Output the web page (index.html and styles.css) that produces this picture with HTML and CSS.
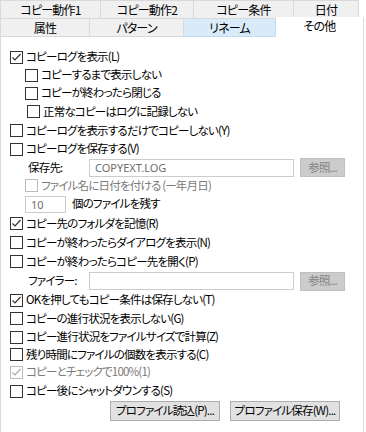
FILE: index.html
```html
<!DOCTYPE html>
<html lang="ja">
<head>
<meta charset="utf-8">
<link rel="stylesheet" href="styles.css">
</head>
<body>
<div class="tabs">
  <div class="tabrow">
    <div class="tab t1">コピー動作1</div>
    <div class="tab t2">コピー動作2</div>
    <div class="tab t3">コピー条件</div>
    <div class="tab t4">日付</div>
  </div>
  <div class="tabrow">
    <div class="tab b1">属性</div>
    <div class="tab b2">パターン</div>
    <div class="tab b3 hover">リネーム</div>
    <div class="tab b4 active">その他</div>
  </div>
</div>
<div class="panel">
  <div class="row first"><span class="cb on"><svg viewBox="0 0 13 13" width="13" height="13"><polyline points="2.5,6.5 5,9 10.5,3"/></svg></span><span class="lbl">コピーログを表示(L)</span></div>
  <div class="row ind"><span class="cb"></span><span class="lbl">コピーするまで表示しない</span></div>
  <div class="row ind"><span class="cb"></span><span class="lbl">コピーが終わったら閉じる</span></div>
  <div class="row ind2 tall"><span class="cb"></span><span class="lbl">正常なコピーはログに記録しない</span></div>
  <div class="row tall"><span class="cb"></span><span class="lbl">コピーログを表示するだけでコピーしない(Y)</span></div>
  <div class="row"><span class="cb"></span><span class="lbl">コピーログを保存する(V)</span></div>
  <div class="row ind field tall">
    <span class="flabel">保存先:</span>
    <span class="input wide dim">COPYEXT.LOG</span>
    <span class="btn small disabled">参照...</span>
  </div>
  <div class="row ind short"><span class="cb dis"></span><span class="lbl dim">ファイル名に日付を付ける (ー年月日)</span></div>
  <div class="row ind taller">
    <span class="input num dim">10</span>
    <span class="lbl count">個のファイルを残す</span>
  </div>
  <div class="row tall"><span class="cb on"><svg viewBox="0 0 13 13" width="13" height="13"><polyline points="2.5,6.5 5,9 10.5,3"/></svg></span><span class="lbl">コピー先のフォルダを記憶(R)</span></div>
  <div class="row tall"><span class="cb"></span><span class="lbl">コピーが終わったらダイアログを表示(N)</span></div>
  <div class="row tall"><span class="cb"></span><span class="lbl">コピーが終わったらコピー先を開く(P)</span></div>
  <div class="row ind field taller">
    <span class="flabel">ファイラー:</span>
    <span class="input wide"></span>
    <span class="btn small disabled">参照...</span>
  </div>
  <div class="row"><span class="cb on"><svg viewBox="0 0 13 13" width="13" height="13"><polyline points="2.5,6.5 5,9 10.5,3"/></svg></span><span class="lbl">OKを押してもコピー条件は保存しない(T)</span></div>
  <div class="row tall"><span class="cb"></span><span class="lbl">コピーの進行状況を表示しない(G)</span></div>
  <div class="row"><span class="cb"></span><span class="lbl">コピー進行状況をファイルサイズで計算(Z)</span></div>
  <div class="row short"><span class="cb"></span><span class="lbl">残り時間にファイルの個数を表示する(C)</span></div>
  <div class="row"><span class="cb dis on"><svg viewBox="0 0 13 13" width="13" height="13"><polyline points="2.5,6.5 5,9 10.5,3"/></svg></span><span class="lbl dim">コピーとチェックで100%(1)</span></div>
  <div class="row taller"><span class="cb"></span><span class="lbl">コピー後にシャットダウンする(S)</span></div>
  <div class="buttons">
    <span class="btn big">プロファイル読込(P)...</span>
    <span class="btn big">プロファイル保存(W)...</span>
  </div>
</div>
</body>
</html>
```
FILE: styles.css
```css
* { box-sizing: border-box; }
html, body {
  margin: 0;
  padding: 0;
  background: #ffffff;
}
body {
  font-family: "Noto Sans CJK JP", "Noto Sans", sans-serif;
  font-size: 11.5px;
  letter-spacing: -0.8px;
  font-feature-settings: "palt";
  color: #000;
  width: 366px;
  height: 432px;
  overflow: hidden;
}
.tabs {
  width: 364px;
}
.tabrow {
  display: flex;
  height: 19px;
}
.tabrow + .tabrow {
  height: 18px;
}
.tab {
  height: 100%;
  background: #f0f0f0;
  border: 1px solid #d9d9d9;
  border-left: none;
  display: flex;
  align-items: center;
  justify-content: center;
  line-height: 1;
  white-space: nowrap;
  font-size: 12px;
}
.tabrow .tab:first-child { border-left: 1px solid #d9d9d9; }
.tabrow + .tabrow .tab { border-top: none; }
.t1 { width: 101px; }
.t2 { width: 93px; }
.t3 { width: 100px; }
.t4 { width: 65px; }
.b1 { width: 90px; }
.b2 { width: 94px; }
.b3 { width: 92px; }
.b4 { width: 88px; }
.tab.hover {
  background: #d9ebf9;
  border-color: #bcdcf4;
  border-top: none;
}
.tab.active {
  position: relative;
  z-index: 1;
  background: #ffffff;
  margin-top: -2px;
  height: 21px;
  border: 1px solid #d9d9d9;
  border-bottom: none;
  border-left: none;
  align-items: flex-start;
  padding-top: 3px;
}
.panel {
  width: 364px;
  min-height: 400px;
  border: 1px solid #d9d9d9;
  border-top: none;
  border-bottom: none;
  padding-top: 11px;
}
.row {
  display: flex;
  align-items: center;
  height: 18px;
  padding-left: 9px;
  white-space: nowrap;
}
.row.tall { height: 19px; }
.row.taller { height: 20px; }
.row.short { height: 17px; }
.row.ind { padding-left: 24px; }
.row.ind2 { padding-left: 26px; }
.cb {
  width: 13px;
  height: 13px;
  border: 1px solid #333333;
  background: #fff;
  flex: none;
  display: block;
  position: relative;
}
.cb svg {
  position: absolute;
  left: -1px;
  top: -1px;
}
.cb polyline {
  fill: none;
  stroke: #333;
  stroke-width: 1.2;
}
.cb.dis {
  border-color: #bcbcbc;
}
.cb.dis polyline {
  stroke: #a8a8a8;
}
.lbl {
  margin-left: 3px;
  line-height: 1;
}
.lbl.dim { color: #7a7a7a; }
.lbl.count { margin-left: 6px; }
.field .flabel {
  width: 64px;
  padding-left: 3px;
  line-height: 1;
}
.input {
  height: 18px;
  border: 1px solid #cccccc;
  background: #fff;
  display: flex;
  align-items: center;
  padding-left: 5px;
  font-family: "Noto Sans", sans-serif;
  font-size: 11px;
  letter-spacing: 0;
  line-height: 1;
}
.input.wide { width: 205px; }
.input.num { width: 41px; height: 17px; }
.input.dim { color: #6d6d6d; }
.btn {
  display: flex;
  align-items: center;
  justify-content: center;
  line-height: 1;
  border: 1px solid #adadad;
  background: #e1e1e1;
  white-space: nowrap;
}
.btn.small {
  width: 45px;
  height: 19px;
  margin-left: 6px;
}
.btn.disabled {
  background: #cccccc;
  border-color: #bfbfbf;
  color: #838383;
}
.btn.big {
  width: 110px;
  height: 20px;
}
.buttons {
  display: flex;
  gap: 10px;
  padding-left: 109px;
}
```
